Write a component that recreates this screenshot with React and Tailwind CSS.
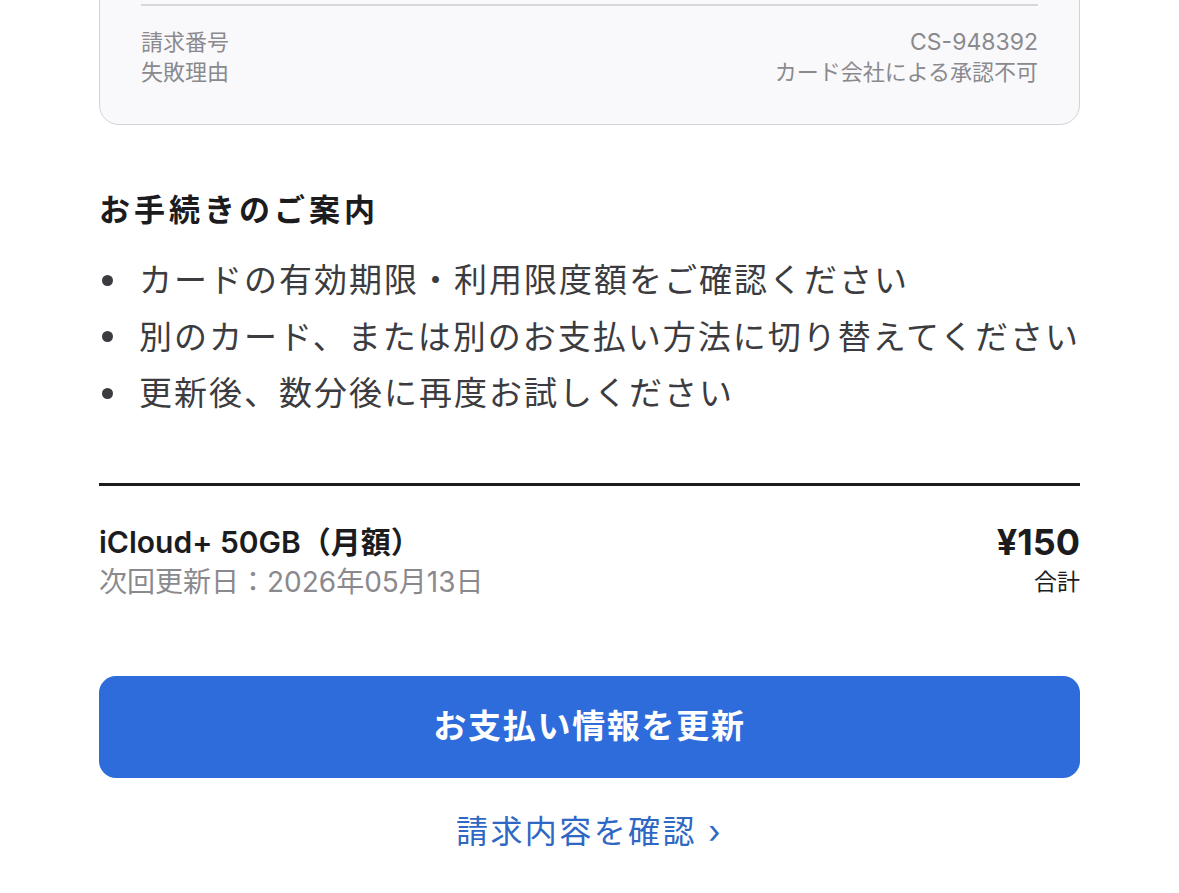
import React from "react";

const steps = [
  "カードの有効期限・利用限度額をご確認ください",
  "別のカード、または別のお支払い方法に切り替えてください",
  "更新後、数分後に再度お試しください",
];

export default function App() {
  return (
    <div
      className="min-h-screen overflow-hidden bg-white px-[99px]"
      style={{ fontFamily: '"Inter", "Noto Sans CJK JP", sans-serif' }}
    >
      {/* Billing detail card (top part scrolled out of view) */}
      <section className="-mt-[60px] rounded-[20px] border border-[#d2d2d7] bg-[#f9f9fb] px-[41px] pt-[63px] pb-[37px]">
        <div className="h-[2px] bg-[#d8d8dc]" />
        <div className="mt-[21px] flex justify-between text-[22px] leading-[30px] text-[#8a8a8e]">
          <div>
            <div>請求番号</div>
            <div>失敗理由</div>
          </div>
          <div className="text-right">
            <div className="text-[23px]">CS-948392</div>
            <div>カード会社による承認不可</div>
          </div>
        </div>
      </section>

      {/* Next steps */}
      <h2 className="mt-[65px] text-[31px] font-bold leading-[40px] tracking-[4px] text-[#1c1c1e]">
        お手続きのご案内
      </h2>
      <ul className="mt-[22px]">
        {steps.map((s) => (
          <li key={s} className="flex items-center text-[33px] leading-[56.5px] tracking-[2px] text-[#3c3c40]">
            <span className="ml-[3px] mr-[26px] h-[11px] w-[11px] shrink-0 rounded-full bg-[#3c3c40]" />
            <span className="whitespace-nowrap">{s}</span>
          </li>
        ))}
      </ul>

      <div className="mt-[61px] h-[3px] bg-[#1c1c1e]" />

      {/* Plan summary */}
      <div className="mt-[38px] flex items-start justify-between">
        <div>
          <div className="text-[30px] font-semibold leading-[36px] text-[#1c1c1e]">iCloud+ 50GB（月額）</div>
          <div className="mt-[4px] text-[28px] leading-[36px] text-[#8a8a8e]">次回更新日：2026年05月13日</div>
        </div>
        <div className="text-right">
          <div className="text-[36px] font-bold leading-[36px] text-[#1c1c1e]">¥150</div>
          <div className="mt-[4px] text-[23px] leading-[36px] text-[#1c1c1e]">合計</div>
        </div>
      </div>

      <button className="mt-[76px] flex h-[102px] w-full items-center justify-center rounded-[17px] bg-[#2f6cdb] text-[33px] font-bold tracking-[1.7px] text-white">
        お支払い情報を更新
      </button>

      <div className="mt-[32px] text-center text-[32px] leading-[44px] tracking-[2.4px] text-[#2f67c4]">
        請求内容を確認 ›
      </div>
    </div>
  );
}
